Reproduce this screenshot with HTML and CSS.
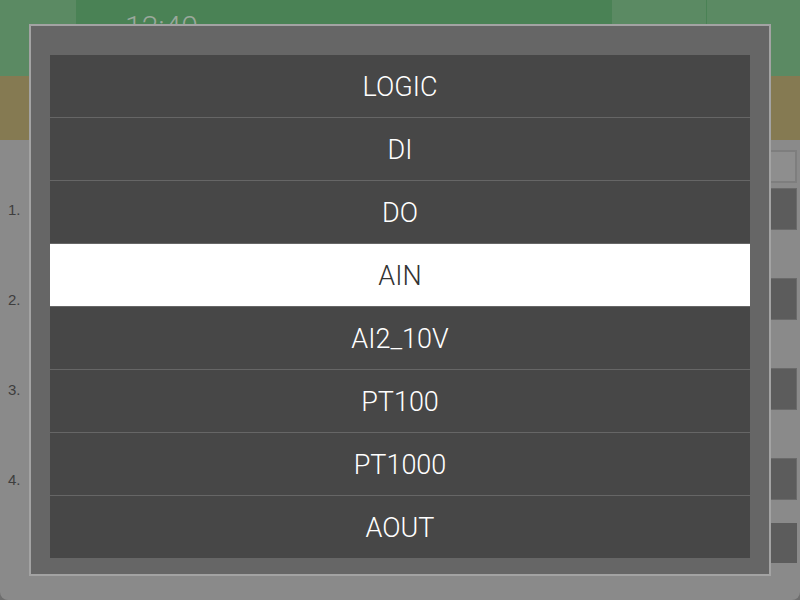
FILE: index.html
```html
<!DOCTYPE html>
<html lang="en">
<head>
    <meta charset="UTF-8">
    <meta name="viewport" content="width=device-width, initial-scale=1.0">
    <title>Module type</title>
    <link rel="stylesheet" href="styles.css">
</head>
<body>
    <div class="app">
        <div class="topbar">
            <div class="menu-btn"></div>
            <div class="clock">12:40</div>
            <div class="top-btn"></div>
            <div class="top-btn"></div>
        </div>
        <div class="subbar"></div>
        <div class="content">
            <div class="head-row">
                <div class="field"></div>
            </div>
            <ul class="slots">
                <li><span class="num">1.</span><span class="slot-btn"></span></li>
                <li><span class="num">2.</span><span class="slot-btn"></span></li>
                <li><span class="num">3.</span><span class="slot-btn"></span></li>
                <li><span class="num">4.</span><span class="slot-btn"></span></li>
            </ul>
            <div class="foot-row">
                <span class="slot-btn"></span>
            </div>
        </div>
    </div>

    <div class="dialog">
        <ul class="type-list">
            <li>LOGIC</li>
            <li>DI</li>
            <li>DO</li>
            <li class="selected">AIN</li>
            <li>AI2_10V</li>
            <li>PT100</li>
            <li>PT1000</li>
            <li>AOUT</li>
        </ul>
    </div>
</body>
</html>
```

FILE: styles.css
```css
* {
    margin: 0;
    padding: 0;
    box-sizing: border-box;
}

html, body {
    width: 800px;
    height: 600px;
    overflow: hidden;
    font-family: Roboto, "Liberation Sans", sans-serif;
    background-color: #6e6e6e;
}

.app {
    height: 600px;
    display: flex;
    flex-direction: column;
    background-color: #8a8a8a;
    border-radius: 0 0 8px 8px;
}

.topbar {
    height: 76px;
    display: flex;
    background-color: #4a8255;
}

.menu-btn {
    width: 76px;
    background-color: #5b8a63;
}

.clock {
    flex: 1;
    padding: 12px 0 0 49px;
    font-size: 30px;
    font-weight: 300;
    line-height: 1;
    color: #9aa89c;
}

.top-btn {
    width: 94px;
    background-color: #5b8a63;
}

.top-btn + .top-btn {
    border-left: 1px solid #4a8255;
}

.subbar {
    height: 64px;
    background-color: #857a52;
}

.content {
    flex: 1;
    padding-top: 10px;
}

.head-row {
    display: flex;
    justify-content: flex-end;
    padding-right: 3px;
}

.field {
    width: 28px;
    height: 33px;
    background-color: #8e8e8e;
    border: 2px solid #7e7e7e;
}

.slots {
    list-style: none;
    margin-top: 5px;
    display: flex;
    flex-direction: column;
    gap: 48px;
}

.slots li {
    height: 42px;
    display: flex;
    align-items: center;
    padding: 0 3px 0 8px;
}

.num {
    font-family: "Liberation Sans", Arial, sans-serif;
    font-size: 15px;
    color: #3e3e3e;
}

.slot-btn {
    margin-left: auto;
    width: 28px;
    height: 42px;
    background-color: #5c5c5c;
    border: 1px solid #6a6a6a;
}

.foot-row {
    display: flex;
    margin-top: 23px;
    padding-right: 3px;
}

.foot-row .slot-btn {
    height: 40px;
    border: none;
}

.dialog {
    position: absolute;
    left: 29px;
    top: 24px;
    width: 742px;
    height: 552px;
    padding: 29px 20px 17px 19px;
    background-color: #666;
    border: 2px solid #a3a3a3;
}

.type-list {
    list-style: none;
    width: 700px;
    background-color: #474747;
}

.type-list li {
    height: 62px;
    padding-top: 2px;
    display: flex;
    align-items: center;
    justify-content: center;
    font-size: 27px;
    font-weight: 300;
    color: #fff;
}

.type-list li + li {
    height: 63px;
    border-top: 1px solid #666;
}

.type-list li.selected {
    background-color: #fff;
    color: #333;
}
```
